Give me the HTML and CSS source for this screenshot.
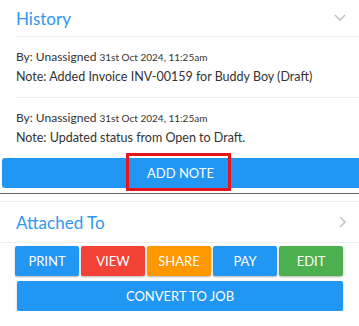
FILE: index.html
```html
<!DOCTYPE html>
<html lang="en">
<head>
    <meta charset="UTF-8">
    <meta name="viewport" content="width=device-width, initial-scale=1.0">
    <title>Invoice</title>
    <link rel="stylesheet" href="styles.css">
</head>
<body>
    <div class="history">
        <div class="panelHeader historyHeader">
            <span class="panelTitle">History</span>
            <svg class="chevron" width="14" height="10" viewBox="0 0 14 10"><path d="M2 2 L7 7 L12 2" fill="none" stroke="#c4c4c4" stroke-width="1.6"/></svg>
        </div>
        <div class="entry">
            <div class="by">By: Unassigned <span class="date">31st Oct 2024, 11:25am</span></div>
            <div class="note">Note: Added Invoice INV-00159 for Buddy Boy (Draft)</div>
        </div>
        <div class="entry last">
            <div class="by">By: Unassigned <span class="date">31st Oct 2024, 11:25am</span></div>
            <div class="note">Note: Updated status from Open to Draft.</div>
        </div>
        <button class="addNote">ADD NOTE<span class="highlight"></span></button>
    </div>

    <div class="attached">
        <div class="panelHeader attachedHeader">
            <span class="panelTitle">Attached To</span>
            <svg class="chevron" width="10" height="14" viewBox="0 0 10 14"><path d="M3 2 L8 7 L3 12" fill="none" stroke="#c4c4c4" stroke-width="1.6"/></svg>
        </div>
        <div class="actions">
            <button class="act blue">PRINT</button>
            <button class="act red">VIEW</button>
            <button class="act orange">SHARE</button>
            <button class="act blue">PAY</button>
            <button class="act green">EDIT</button>
        </div>
        <button class="convert">CONVERT TO JOB</button>
    </div>
</body>
</html>
```

FILE: styles.css
```css
body {
    margin: 0;
    width: 359px;
    background-color: #fff;
    font-family: "Lato", "Noto Sans", sans-serif;
    color: #333;
}

.history {
    border-bottom: 1px solid #666;
    padding-bottom: 5px;
}

.panelHeader {
    display: flex;
    align-items: center;
    justify-content: space-between;
}
.historyHeader {
    height: 36px;
    margin-left: 16px;
    padding-right: 12px;
    border-bottom: 1px solid #eee;
}
.panelTitle {
    font-size: 17px;
    color: #2f98f0;
}

.entry {
    margin-left: 16px;
    padding: 10px 0 11px 0;
    border-bottom: 1px solid #eee;
    font-size: 12.5px;
    line-height: 19px;
}
.entry.last {
    border-bottom: none;
}
.by {
    font-size: 12px;
}
.date {
    font-size: 10px;
}

button {
    font-family: "Lato", "Noto Sans", sans-serif;
    border: none;
    color: #fff;
    font-size: 13px;
    cursor: pointer;
}

.addNote {
    position: relative;
    display: block;
    width: 357px;
    height: 30px;
    margin: 0 0 0 2px;
    background-color: #2196f3;
    border-radius: 3px 0 0 3px;
}
.highlight {
    position: absolute;
    left: 124px;
    top: -5px;
    width: 99px;
    height: 32px;
    border: 3px solid #e8141b;
}

.attached {
    margin-top: 7px;
    border-top: 1px solid #f0f0f0;
}
.attachedHeader {
    height: 40px;
    padding: 0 12px 0 16px;
    border-bottom: 1px solid #eee;
}

.actions {
    display: flex;
    gap: 2px;
    padding: 3px 0 0 15px;
}
.act {
    width: 64px;
    height: 30px;
    border-radius: 2px;
    box-shadow: 0 1px 2px rgba(0, 0, 0, 0.3);
}
.blue { background-color: #2196f3; }
.red { background-color: #f44336; }
.orange { background-color: #ff9800; }
.green { background-color: #4caf50; }

.convert {
    display: block;
    width: 326px;
    height: 30px;
    margin: 5px 0 0 17px;
    background-color: #2196f3;
    border-radius: 2px;
    box-shadow: 0 1px 2px rgba(0, 0, 0, 0.3);
}
```
